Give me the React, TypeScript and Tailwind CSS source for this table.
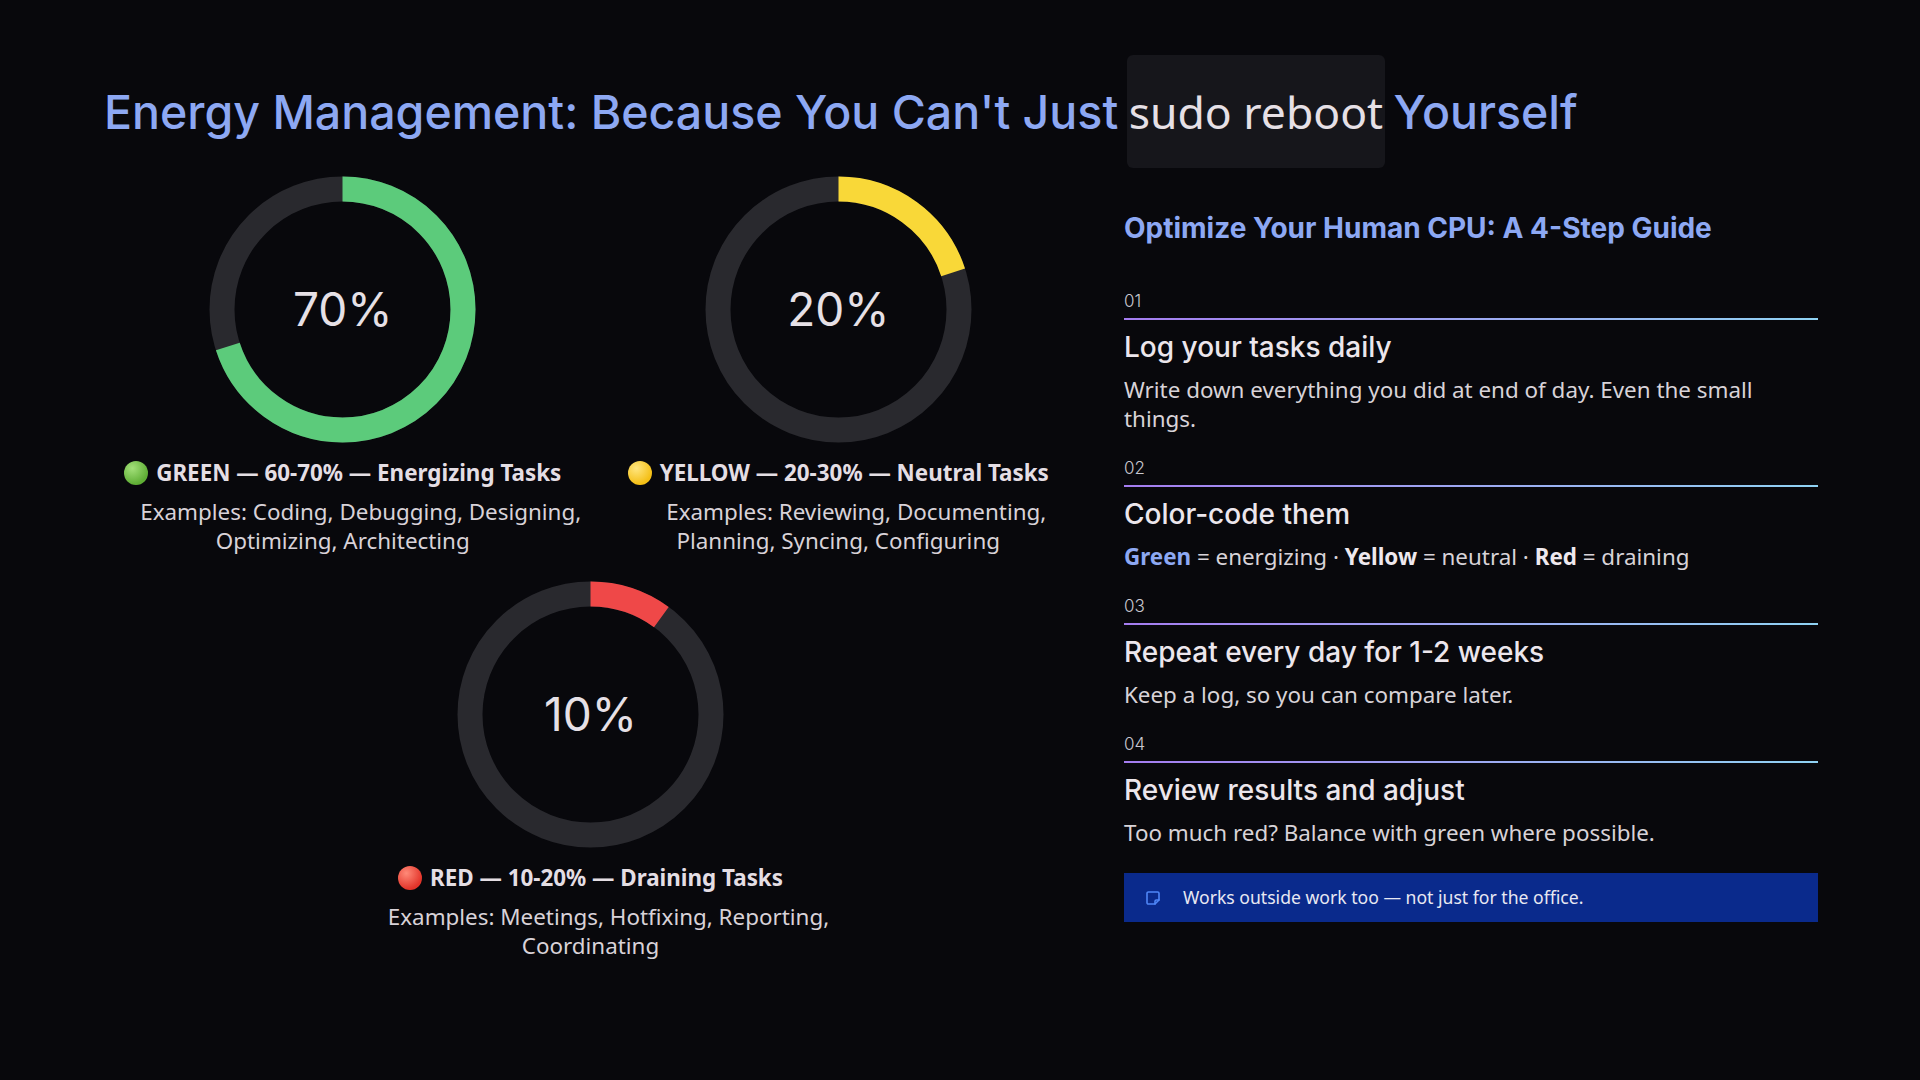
import type { ReactNode } from "react";

const sans = "font-['Noto_Sans',sans-serif]";
const head = "font-['Inter',sans-serif]";

type Bucket = {
  pct: number;
  color: string;
  dot: string;
  label: string;
  examples: string;
};

const green: Bucket = {
  pct: 70,
  color: "#5ccb7b",
  dot: "bg-[radial-gradient(circle_at_35%_30%,#a3e07a,#5fae35_70%)]",
  label: "GREEN — 60-70% — Energizing Tasks",
  examples: "Examples: Coding, Debugging, Designing, Optimizing, Architecting",
};

const yellow: Bucket = {
  pct: 20,
  color: "#f9d838",
  dot: "bg-[radial-gradient(circle_at_35%_30%,#ffe680,#f4bf16_70%)]",
  label: "YELLOW — 20-30% — Neutral Tasks",
  examples: "Examples: Reviewing, Documenting, Planning, Syncing, Configuring",
};

const red: Bucket = {
  pct: 10,
  color: "#ef4848",
  dot: "bg-[radial-gradient(circle_at_35%_30%,#ff8a78,#e3342a_70%)]",
  label: "RED — 10-20% — Draining Tasks",
  examples: "Examples: Meetings, Hotfixing, Reporting, Coordinating",
};

function Donut({ pct, color }: { pct: number; color: string }) {
  const r = 120.5;
  const c = 2 * Math.PI * r;
  return (
    <div className="relative h-[267px] w-[267px]">
      <svg width="267" height="267" viewBox="0 0 267 267" className="-rotate-90">
        <circle cx="133.5" cy="133.5" r={r} fill="none" stroke="#29292e" strokeWidth="25" />
        <circle
          cx="133.5"
          cy="133.5"
          r={r}
          fill="none"
          stroke={color}
          strokeWidth="25"
          strokeDasharray={`${(c * pct) / 100} ${c}`}
        />
      </svg>
      <div
        className={`absolute inset-0 flex items-center justify-center text-[46px] text-[#e6e0e6] ${head}`}
      >
        {pct}%
      </div>
    </div>
  );
}

function BucketCard({ b }: { b: Bucket }) {
  return (
    <div className="flex flex-col items-center">
      <Donut pct={b.pct} color={b.color} />
      <div
        className={`mt-4 flex items-center gap-[8px] text-[22.4px] font-bold leading-[28px] text-[#e4dee4] ${sans}`}
      >
        <span className={`inline-block h-[24px] w-[24px] rounded-full ${b.dot}`} />
        <span>{b.label}</span>
      </div>
      <p
        className={`mt-[10px] max-w-[490px] indent-[36px] text-center text-[22.4px] leading-[29px] text-[#d8d2d8] ${sans}`}
      >
        {b.examples}
      </p>
    </div>
  );
}

function Step({ n, title, children }: { n: string; title: string; children: ReactNode }) {
  return (
    <div>
      <div className={`text-[17px] font-light leading-[22px] text-[#c9c7cf] ${head}`}>{n}</div>
      <div className="mt-[6px] h-[2px] w-full bg-gradient-to-r from-[#a47cf0] to-[#8fd2f3]" />
      <h3 className={`mt-[10px] text-[28px] font-medium leading-[34px] text-[#ece6ec] ${head}`}>
        {title}
      </h3>
      <div className={`mt-[11px] text-[22.4px] leading-[29px] text-[#d8d3d8] ${sans}`}>
        {children}
      </div>
    </div>
  );
}

export default function App() {
  return (
    <div className="h-[1080px] w-full overflow-hidden bg-[#08080c] pl-[104px] pr-[102px] pt-[86px]">
      <h1 className={`text-[46.5px] font-medium leading-[52px] text-[#8da8f3] ${head}`}>
        Energy Management: Because You Can't Just{" "}
        <code
          className={`mx-[-4px] rounded-md bg-[#16161b] px-[2px] py-[26px] text-[44.5px] font-normal text-[#e6e0e6] ${sans}`}
        >
          sudo reboot
        </code>{" "}
        Yourself
      </h1>

      <div className="mt-[38px] grid grid-cols-[1fr_694px] items-start gap-[47px]">
        <div className="grid grid-cols-2 gap-x-[18px]">
          <BucketCard b={green} />
          <BucketCard b={yellow} />
          <div className="col-span-2 mt-[26px]">
            <BucketCard b={red} />
          </div>
        </div>

        <div className="pt-[35px]">
          <h2 className={`text-[28px] font-bold leading-[34px] text-[#8da8f3] ${head}`}>
            Optimize Your Human CPU: A 4-Step Guide
          </h2>
          <div className="mt-[45px] flex flex-col gap-[24px]">
            <Step n="01" title="Log your tasks daily">
              Write down everything you did at end of day. Even the small things.
            </Step>
            <Step n="02" title="Color-code them">
              <b className="font-bold text-[#8da8f3]">Green</b> = energizing ·{" "}
              <b className="font-bold text-[#eee8ee]">Yellow</b> = neutral ·{" "}
              <b className="font-bold text-[#eee8ee]">Red</b> = draining
            </Step>
            <Step n="03" title="Repeat every day for 1-2 weeks">
              Keep a log, so you can compare later.
            </Step>
            <Step n="04" title="Review results and adjust">
              Too much red? Balance with green where possible.
            </Step>
          </div>
          <div
            className={`mt-[26px] flex h-[49px] items-center gap-[22px] bg-[#0a2a8c] pl-[21px] text-[17.6px] text-[#e8e8f2] ${sans}`}
          >
            <svg
              width="16"
              height="16"
              viewBox="0 0 24 24"
              fill="none"
              stroke="#4f86f7"
              strokeWidth="2.4"
              strokeLinecap="round"
              strokeLinejoin="round"
            >
              <path d="M5 3h14a2 2 0 0 1 2 2v10l-6 6H5a2 2 0 0 1-2-2V5a2 2 0 0 1 2-2z" />
              <path d="M15 21v-4a2 2 0 0 1 2-2h4" />
            </svg>
            <span>Works outside work too — not just for the office.</span>
          </div>
        </div>
      </div>
    </div>
  );
}
